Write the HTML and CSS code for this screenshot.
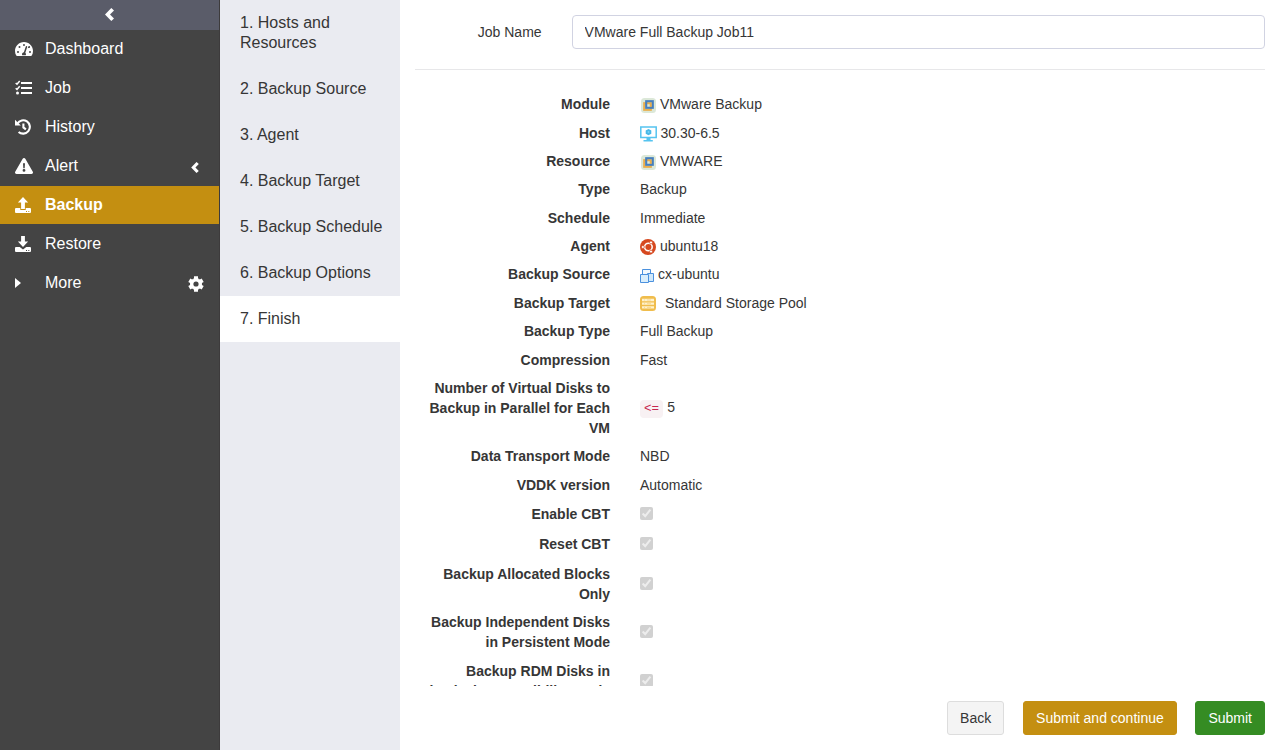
FILE: index.html
```html
<!DOCTYPE html>
<html lang="en">
<head>
<meta charset="utf-8">
<title>Backup</title>
<link rel="stylesheet" href="styles.css">
</head>
<body>
<svg class="defs" width="0" height="0">
  <symbol id="vm" viewBox="0 0 15 15"><rect width="15" height="15" rx="3.5" fill="#dce8d8"/><rect x="3.2" y="5.2" width="6.6" height="6.6" fill="none" stroke="#e9ae4c" stroke-width="2.1"/><rect x="5.2" y="3.2" width="6.6" height="6.6" fill="none" stroke="#477fbd" stroke-width="2.1"/><path d="M9.8 6.2v2.6" stroke="#e9ae4c" stroke-width="1.2"/></symbol>
  <symbol id="left" viewBox="0 0 9 13"><path fill="currentColor" d="M0 6.5 6.3 0 9 2.4 5 6.5l4 4.1L6.3 13z"/></symbol>
</svg>
<div class="app">
  <nav class="sidebar">
    <div class="collapse"><svg width="9" height="13"><use href="#left"/></svg></div>
    <a class="item"><svg class="ico" width="18" height="16" viewBox="0 0 576 512"><path fill="currentColor" d="M288 32C129 32 0 161 0 320c0 53 14 102 39 145 6 10 16 15 27 15h444c11 0 21-5 27-15 25-43 39-92 39-145C576 161 447 32 288 32zm0 64c15 0 27 10 31 24l-7 21c-5 11-14 19-24 19a32 32 0 0 1 0-64zM96 384a32 32 0 1 1 0-64 32 32 0 0 1 0 64zm48-160a32 32 0 1 1 0-64 32 32 0 0 1 0 64zm247-32-61 184c13 11 22 28 22 46 0 12-4 22-9 32H233c-6-10-9-20-9-32 0-34 27-62 60-64l61-183c4-12 18-19 31-15s19 20 15 32zm15 50 23-69c14-14 35-18 49 0 20 25-12 61-42 51-13-4-24 5-30 18zm74 142a32 32 0 1 1 0-64 32 32 0 0 1 0 64z"/></svg><span>Dashboard</span></a>
    <a class="item"><svg class="ico" width="17" height="16" viewBox="0 0 17 16"><g fill="none" stroke="currentColor"><path d="M6 3h11M6 8h11M6 13h11" stroke-width="2"/><path d="M.7 3 2 4.2 4.7 1M.7 8.2 2 9.4 4.7 6.2" stroke-width="1.5"/></g><circle cx="2.5" cy="13" r="1.5" fill="currentColor"/></svg><span>Job</span></a>
    <a class="item"><svg class="ico" width="16" height="16" viewBox="0 0 16 16"><g fill="none" stroke="currentColor" stroke-width="2.1"><path d="M2.4 4.5A6.7 6.7 0 1 1 3.6 12.9"/><path d="M8.4 4.4v4l2.5 1.9"/></g><path fill="currentColor" d="M0 .8v5.7h5.8z"/></svg><span>History</span></a>
    <a class="item"><svg class="ico" width="18" height="16" viewBox="0 0 18 16"><path fill="currentColor" fill-rule="evenodd" d="M7.7.8a1.5 1.5 0 0 1 2.6 0l7.5 13a1.5 1.5 0 0 1-1.3 2.2h-15a1.5 1.5 0 0 1-1.3-2.2zM8 5.2l.3 5h1.4l.3-5zM9 11a1.4 1.4 0 1 0 0 2.8A1.4 1.4 0 0 0 9 11z"/></svg><span>Alert</span><svg class="chev" width="8" height="11"><use href="#left"/></svg></a>
    <a class="item active"><svg class="ico" width="16" height="16" viewBox="0 0 16 16"><path fill="currentColor" fill-rule="evenodd" d="M6.1 12V5.6H2.9L8 0l5.1 5.6H9.9V12zM.7 11H5.3v2h5.4v-2h4.6l.7.7v3.6l-.7.7H.7l-.7-.7v-3.6zM11 14v1h1v-1zm2.3 0v1h1v-1z"/></svg><span>Backup</span></a>
    <a class="item"><svg class="ico" width="16" height="16" viewBox="0 0 16 16"><path fill="currentColor" d="M6.1 0h3.8v5.4h3.2L8 11 2.9 5.4h3.2z"/><path fill="currentColor" fill-rule="evenodd" d="M.7 11h4L8 13.6l3.3-2.6h4l.7.7v3.6l-.7.7H.7l-.7-.7v-3.6zM11 14v1h1v-1zm2.3 0v1h1v-1z"/></svg><span>Restore</span></a>
    <a class="item"><svg class="ico caret" width="6" height="10" viewBox="0 0 6 10"><path fill="currentColor" d="M0 0 6 5 0 10z"/></svg><span>More</span><svg class="gear" width="16" height="16" viewBox="0 0 16 16"><g stroke="currentColor"><path d="M8 .3v15.4M1.3 4.15l13.4 7.7M1.3 11.85l13.4-7.7" stroke-width="4"/><circle cx="8" cy="8" r="5.5" fill="currentColor"/></g><circle class="hole" cx="8" cy="8" r="2.6"/></svg></a>
  </nav>
  <aside class="steps">
    <a class="step">1. Hosts and Resources</a><a class="step">2. Backup Source</a><a class="step">3. Agent</a><a class="step">4. Backup Target</a><a class="step">5. Backup Schedule</a><a class="step">6. Backup Options</a><a class="step current">7. Finish</a>
  </aside>
  <main class="main">
    <header class="job"><label for="job-name">Job Name</label><input id="job-name" value="VMware Full Backup Job11"></header>
    <dl class="summary">
      <div class="row"><dt>Module</dt><dd><svg class="vm" width="15" height="15"><use href="#vm"/></svg>VMware Backup</dd></div>
      <div class="row host-row"><dt>Host</dt><dd><svg class="host" width="17" height="16" viewBox="0 0 17 16"><path fill="none" stroke="#55c4f0" stroke-width="1.5" d="M.8.9h15.4v10.5H.8z"/><path fill="#55c4f0" d="M6.5 12h4v2h2.3v1.6H3.5V14h3z"/><path fill="#48b9e8" d="m8.5 3 2.8 1.6v3.1L8.5 9.3 5.7 7.7V4.6z"/><circle cx="8.5" cy="6.1" r="1" fill="#7fd0f0"/></svg>30.30-6.5</dd></div>
      <div class="row"><dt>Resource</dt><dd><svg class="vm" width="15" height="15"><use href="#vm"/></svg>VMWARE</dd></div>
      <div class="row"><dt>Type</dt><dd>Backup</dd></div>
      <div class="row"><dt>Schedule</dt><dd>Immediate</dd></div>
      <div class="row"><dt>Agent</dt><dd><svg class="ubuntu" width="16" height="16" viewBox="0 0 16 16"><circle cx="8" cy="8" r="8" fill="#d6481f"/><circle cx="8.4" cy="8" r="3.8" fill="none" stroke="#fff" stroke-width="1.5"/><g fill="#fff" stroke="#d6481f" stroke-width=".7"><circle cx="2.9" cy="8" r="1.5"/><circle cx="11" cy="3.4" r="1.5"/><circle cx="11" cy="12.6" r="1.5"/></g></svg>ubuntu18</dd></div>
      <div class="row"><dt>Backup Source</dt><dd><svg class="source" width="14" height="14" viewBox="0 0 14 14"><path d="M2.5.5h8v6h-8z" fill="#f2f9fe" stroke="#4b91de"/><path d="M7.5 4.5h6v8h-6z" fill="#cfe8fb" stroke="#4b91de"/><path d="M.5 5.5h8v8h-8z" fill="#d9eefc" stroke="#4b91de"/></svg>cx-ubuntu</dd></div>
      <div class="row"><dt>Backup Target</dt><dd><svg class="pool" width="16" height="15" viewBox="0 0 16 15"><rect width="16" height="15" rx="3.5" fill="#f0bd4d"/><path d="M2 4h12M2 7.7h12M2 11.4h12" stroke="#fff2cc" stroke-width="2.3"/><path d="M4 4h1m2 0h4M4 7.7h1m2 0h4M4 11.4h1m2 0h4" stroke="#f3cf7d" stroke-width=".7"/></svg>Standard Storage Pool</dd></div>
      <div class="row"><dt>Backup Type</dt><dd>Full Backup</dd></div>
      <div class="row"><dt>Compression</dt><dd>Fast</dd></div>
      <div class="row"><dt>Number of Virtual Disks to Backup in Parallel for Each VM</dt><dd class="parallel"><code>&lt;=</code>5</dd></div>
      <div class="row"><dt>Data Transport Mode</dt><dd>NBD</dd></div>
      <div class="row before-checks"><dt>VDDK version</dt><dd>Automatic</dd></div>
      <div class="row tall"><dt>Enable CBT</dt><dd><input type="checkbox" checked disabled></dd></div>
      <div class="row tall"><dt>Reset CBT</dt><dd><input type="checkbox" checked disabled></dd></div>
      <div class="row"><dt>Backup Allocated Blocks Only</dt><dd><input type="checkbox" checked disabled></dd></div>
      <div class="row"><dt>Backup Independent Disks in Persistent Mode</dt><dd><input type="checkbox" checked disabled></dd></div>
      <div class="row"><dt>Backup RDM Disks in physical Compatibility Mode</dt><dd><input type="checkbox" checked disabled></dd></div>
    </dl>
    <footer class="actions"><button class="btn back">Back</button><button class="btn gold">Submit and continue</button><button class="btn green">Submit</button></footer>
  </main>
</div>
</body>
</html>
```
FILE: styles.css
```css
* { box-sizing: border-box; }
body { margin: 0; font: 14px/20px "Liberation Sans", Arial, sans-serif; color: #363636; background: #fff; }
.defs { display: none; }
.app { display: flex; height: 750px; overflow: hidden; }
.sidebar { width: 220px; flex: none; background: #444; color: #fff; border-right: 1px solid #3d3b3c; font-size: 16px; }
.collapse { height: 30px; background: #5a5c69; display: flex; align-items: center; justify-content: center; padding-bottom: 1px; }
.item { display: flex; align-items: center; height: 38px; margin-bottom: 1px; padding-left: 15px; }
.item .ico { margin-bottom: 1px; flex: none; }
.item span { width: 120px; margin-left: 12px; line-height: 20px; }
.item .ico[width="17"] + span { margin-left: 13px; }
.item .ico[width="16"] + span { margin-left: 14px; }
.item .caret + span { margin-left: 24px; }
.active { background: #c48f11; font-weight: bold; }
.chev { margin: 2px 20px 0 auto; }
.gear { margin: 2px 15px 0 auto; }
.hole { fill: #444; }
.steps { width: 180px; flex: none; background: #eaebf1; font-size: 16px; }
.step { display: block; padding: 13px 10px 13px 20px; }
.current { background: #fff; }
.main { flex: 1; min-width: 0; padding: 0 15px; display: flex; flex-direction: column; }
.job { height: 70px; flex: none; display: flex; align-items: flex-start; padding-top: 15px; border-bottom: 1px solid #e7e7e9; }
.job label { width: 126.6px; text-align: right; line-height: 34px; margin-right: 30px; }
.job input { flex: 1; height: 34px; border: 1px solid #d1d3e2; border-radius: 4px; padding: 0 12px; font: inherit; color: #363636; }
.summary { flex: 1; min-height: 0; margin: 0; padding-top: 24.1px; overflow: hidden; }
.row { display: grid; grid-template-columns: 195px 1fr; column-gap: 30px; align-items: center; margin-bottom: 8.4px; }
.host-row { margin-top: 8.6px; margin-bottom: 8.2px; }
.before-checks { margin-bottom: 9px; }
.tall { margin-bottom: 10px; }
dt { font-weight: bold; text-align: right; padding-left: 4px; }
dd { margin: 0; display: flex; align-items: center; height: 20px; }
.vm { margin: 3px 4px 0 1px; }
.host { margin: 2px 3.5px 0 0; }
.ubuntu { margin: 2px 4px 0 0; }
.source { margin: 4px 4px 0 0; }
.pool { margin: 2px 9px 0 0; }
.parallel { padding-bottom: 2px; }
code { font: 12.6px/18px "Liberation Mono", monospace; color: #c7254e; background: #f8f1f3; border-radius: 4px; padding: 0 4px; margin: 3px 4px 0 0; }
dd input { width: 13px; height: 13px; margin: 0 0 1px; }
.actions { height: 64px; flex: none; display: flex; justify-content: flex-end; align-items: flex-start; gap: 18.4px; padding-top: 15px; }
.btn { height: 34px; padding: 0 12px; border: 1px solid #ddd; border-radius: 3px; background: #f4f4f4; color: #363636; font: inherit; }
.back { margin-right: .5px; }
.gold { background: #c48f11; border-color: #c48f11; color: #fff; padding-right: 12.3px; }
.green { background: #358c23; border-color: #358c23; color: #fff; }
```
